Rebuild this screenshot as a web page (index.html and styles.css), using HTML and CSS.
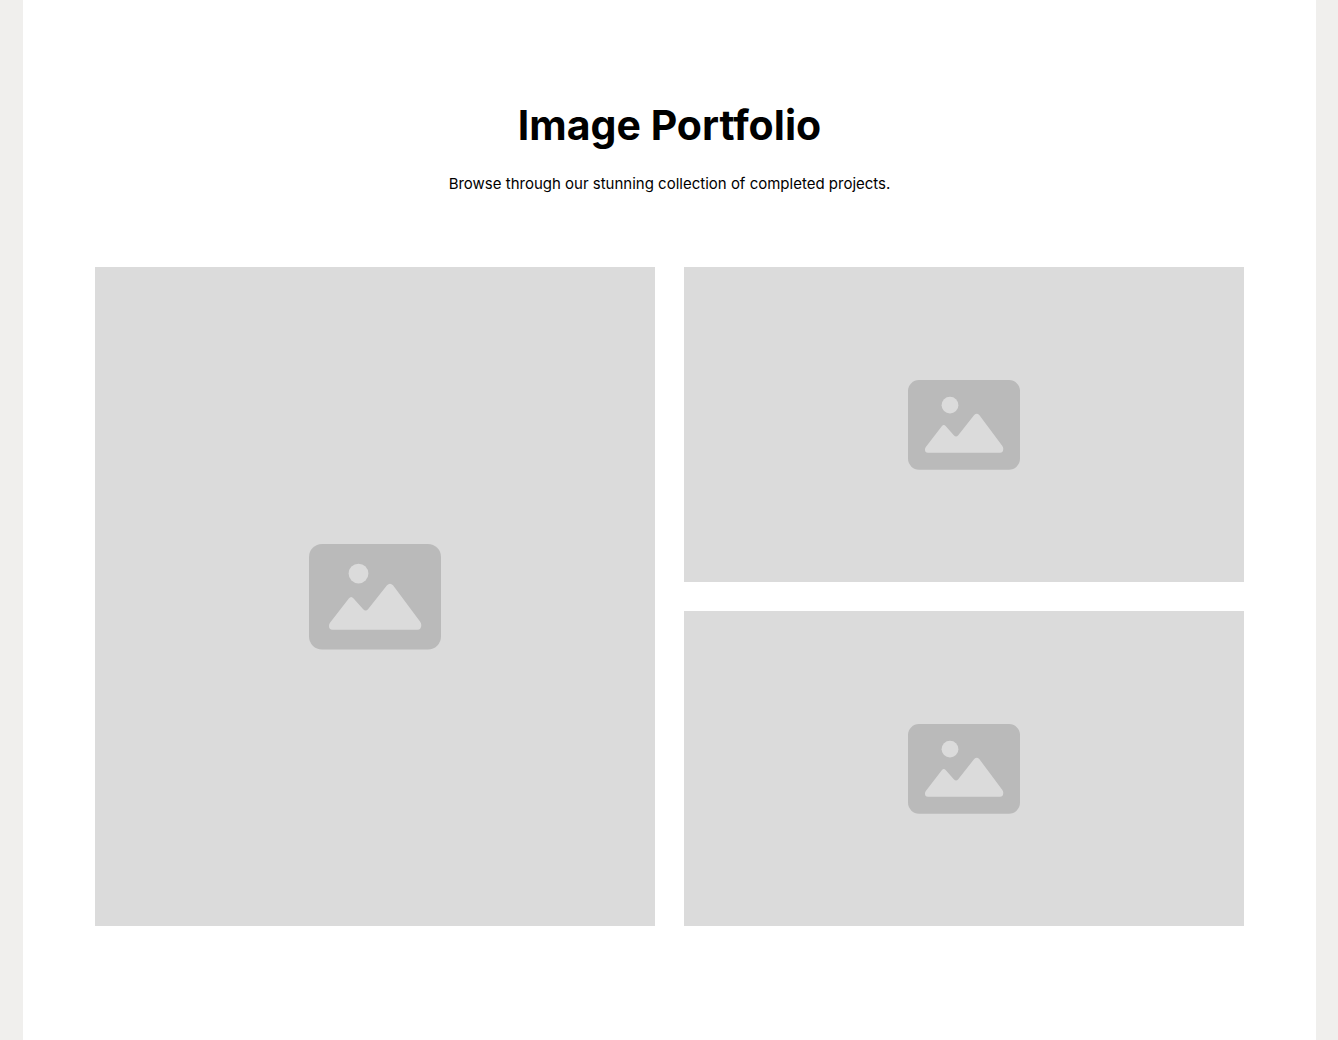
FILE: index.html
```html
<!DOCTYPE html>
<html lang="en">
<head>
  <meta charset="utf-8">
  <meta name="viewport" content="width=device-width, initial-scale=1">
  <title>Image Portfolio</title>
  <link rel="stylesheet" href="styles.css">
</head>
<body>
  <svg class="symbols" aria-hidden="true">
    <symbol id="picture" viewBox="0 0 132 106">
      <rect width="132" height="105.6" rx="13" fill="#bababa"/>
      <circle cx="49.5" cy="29.6" r="9.9" fill="#dbdbdb"/>
      <path fill="#dbdbdb" d="M21 78.8 39.8 54.6Q42.2 51.6 44.6 54.6L54 65Q56.6 68 59.2 65L78 41.2Q81 38.2 84 41.2L111 77.6Q112.3 79.4 112.3 81Q112.3 85.8 108.5 85.8H23.5Q20 85.8 20 82Q20 80 21 78.8Z"/>
    </symbol>
  </svg>
  <main class="portfolio">
    <header class="intro">
      <h1 class="title">Image Portfolio</h1>
      <p class="lead">Browse through our stunning collection of completed projects.</p>
    </header>
    <div class="gallery">
      <div class="tile tile-tall" role="img" aria-label="Project image"><svg class="icon icon-large" viewBox="0 0 132 106"><use href="#picture"/></svg></div>
      <div class="tile" role="img" aria-label="Project image"><svg class="icon" viewBox="0 0 132 106"><use href="#picture"/></svg></div>
      <div class="tile" role="img" aria-label="Project image"><svg class="icon" viewBox="0 0 132 106"><use href="#picture"/></svg></div>
    </div>
  </main>
</body>
</html>
```
FILE: styles.css
```css
* {
  box-sizing: border-box;
}

body {
  margin: 0;
  padding: 0 22px 0 23px;
  background: #f0efed;
  color: #000;
  font-family: Inter, "Liberation Sans", sans-serif;
}

.symbols {
  display: none;
}

.portfolio {
  min-height: 100vh;
  padding: 100px 72px 114px;
  background: #fff;
}

.intro {
  margin-bottom: 72px;
  text-align: center;
}

.title {
  margin: 0 0 22px;
  font-size: 41px;
  line-height: 50px;
  font-weight: 700;
}

.lead {
  margin: 0;
  font-size: 15px;
  line-height: 23px;
}

.gallery {
  display: grid;
  grid-template-columns: 1fr 1fr;
  gap: 29px;
}

.tile {
  display: flex;
  align-items: center;
  justify-content: center;
  aspect-ratio: 16 / 9;
  background: #dbdbdb;
}

.tile-tall {
  grid-row: span 2;
  aspect-ratio: auto;
}

.icon {
  width: 112px;
  height: 90px;
}

.icon-large {
  width: 132px;
  height: 106px;
}
```
